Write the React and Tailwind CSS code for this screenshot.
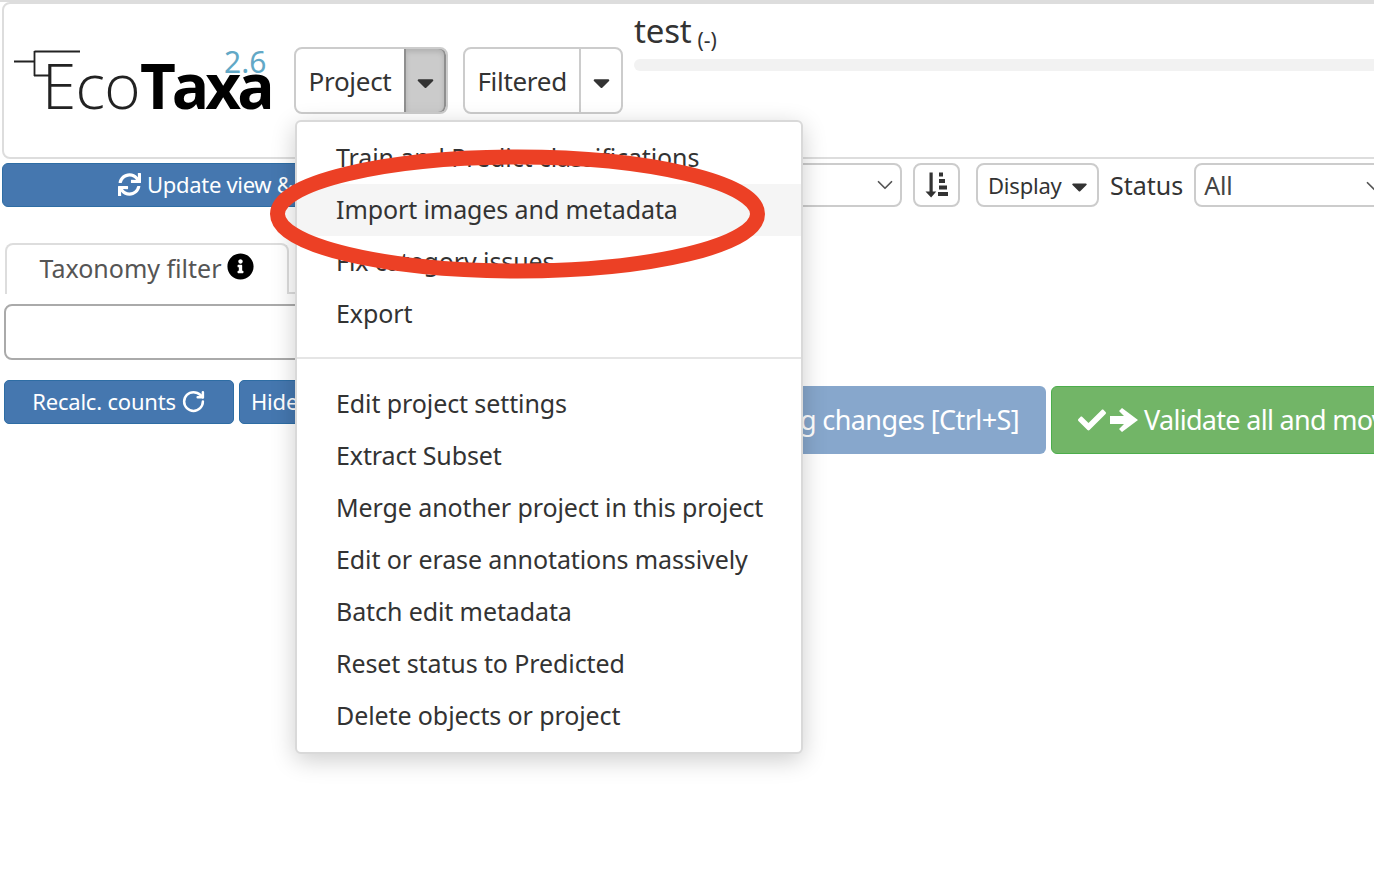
import React from "react";
import { FaCheck, FaInfoCircle, FaSync, FaCaretDown } from "react-icons/fa";
import { LuChevronDown, LuRotateCw } from "react-icons/lu";

const font = { fontFamily: '"Noto Sans", sans-serif' };

function Logo() {
  return (
    <div className="relative w-[290px] h-[67px] shrink-0 self-center overflow-visible">
      <svg className="absolute left-[10px] top-[2px]" width="70" height="40" viewBox="0 0 70 40">
        <path d="M0 13.5H20M20.5 3V28M20.5 3.5H66M20 27.5H36" fill="none" stroke="#222" strokeWidth="1.8" />
      </svg>
      <span className="absolute left-[38px] top-[6px] flex items-baseline leading-[66px] text-[62px] whitespace-nowrap text-[#222] [font-family:'Open_Sans',sans-serif]">
        <span className="font-light tracking-[-0.7px]">Eco</span>
        <span className="font-bold tracking-[-4px] text-black">Taxa</span>
      </span>
      <span className="absolute left-[220px] top-[1px] text-[30px] leading-[30px] text-[#62a8c6]">2.6</span>
    </div>
  );
}

function SplitButton({ label, open, labelWidth, className }) {
  return (
    <div className={`flex h-[67px] shrink-0 rounded-[8px] border-2 border-[#ccc] overflow-hidden ${className}`}>
      <div className="flex items-center justify-center pt-[2px] text-[26px] tracking-[-0.3px] text-[#333]" style={{ width: labelWidth }}>
        {label}
      </div>
      <div
        className={
          open
            ? "flex w-[42px] items-center justify-center pt-[4px] border-l-2 border-[#8f8f8f] bg-[#cbcbcb] shadow-[inset_0_3px_5px_rgba(0,0,0,0.125)] -my-[2px] -mr-[2px] border-y-2 border-r-2 rounded-r-[8px]"
            : "flex w-[42px] items-center justify-center pt-[4px] border-l-2 border-[#ccc]"
        }
      >
        <FaCaretDown className="text-[#333] text-[27px]" />
      </div>
    </div>
  );
}

function MenuItem({ children, active }) {
  return (
    <div className={`h-[52px] pl-[39px] flex items-center text-[25px] tracking-[-0.1px] text-[#333] whitespace-nowrap ${active ? "bg-[#f5f5f5]" : ""}`}>
      {children}
    </div>
  );
}

export default function App() {
  return (
    <div className="relative h-[894px] w-full overflow-hidden bg-white border-t-2 border-[#ddd]" style={font}>
      {/* top panel */}
      <div className="ml-[2px] -mr-[10px] h-[157px] rounded-[8px] border-2 border-[#ddd] flex items-start">
        <div className="flex items-center h-[153px] pb-[2px]">
          <Logo />
        </div>
        <SplitButton label="Project" open labelWidth={108} className="mt-[43px] w-[154px]" />
        <SplitButton label="Filtered" labelWidth={115} className="mt-[43px] ml-[15px] w-[160px]" />
        <div className="ml-[11px] flex-1">
          <div className="h-[55px] flex items-end pb-[6px] text-[#333]">
            <span className="text-[33px] tracking-[-0.2px] leading-[44px]">test</span>
            <span className="ml-[6px] -mb-[5px] text-[21px] leading-[36px]">(-)</span>
          </div>
          <div className="h-[12px] rounded-[6px] bg-[#f2f2f2]" />
        </div>
      </div>

      {/* toolbar */}
      <div className="mt-[4px] ml-[2px] flex items-center h-[44px] whitespace-nowrap">
        <div className="flex h-[44px] w-[538px] shrink-0 items-center justify-start pl-[115px] pb-[2px] rounded-[6px] border border-[#2e6da4] bg-[#4577af] text-white text-[22px] tracking-[-0.3px]">
          <FaSync className="mr-[6px] text-[23px]" />
          Update view &amp; filters
        </div>
        <div className="ml-[2px] flex h-[44px] w-[360px] shrink-0 items-center justify-end rounded-[8px] border-2 border-[#ccc] pr-[2px]">
          <LuChevronDown className="text-[#555] text-[26px]" strokeWidth={1.6} />
        </div>
        <div className="ml-[11px] flex h-[44px] w-[47px] shrink-0 items-center justify-center rounded-[8px] border-2 border-[#ccc]">
          <svg width="24" height="26" viewBox="0 0 24 26" fill="#333">
            <path d="M4.5 0.5h3.2v19h3.6L6.1 25.5 0.5 19.5h4z" />
            <rect x="14" y="0.5" width="4" height="4" />
            <rect x="14" y="7" width="6" height="4" />
            <rect x="14" y="13.5" width="8" height="4" />
            <rect x="13" y="20" width="10" height="4" />
          </svg>
        </div>
        <div className="ml-[16px] flex h-[44px] w-[123px] shrink-0 items-center justify-start gap-[5px] pl-[10px] rounded-[8px] border-2 border-[#ccc] text-[#333] text-[22px] tracking-[-0.2px]">
          Display
          <FaCaretDown className="text-[25px] mt-[2px]" />
        </div>
        <span className="ml-[11px] pt-[2px] text-[25px] tracking-[0px] text-[#333]">Status</span>
        <div className="ml-[11px] flex h-[44px] flex-1 -mr-[20px] items-center justify-between rounded-[8px] border-2 border-[#ccc] pl-[8px] pr-[5px] pt-[1px] text-[25px] text-[#444] tracking-[-0.2px]">
          All
          <LuChevronDown className="text-[#555] text-[26px]" strokeWidth={1.6} />
        </div>
      </div>

      {/* tabs */}
      <div className="mt-[36px] ml-[5px] flex h-[51px]">
        <div className="flex w-[284px] items-center justify-center gap-[6px] rounded-t-[8px] border-x-2 border-t-2 border-[#ddd] pb-[2px] text-[25px] tracking-[0px] text-[#555]">
          Taxonomy filter
          <FaInfoCircle className="text-[27px] text-black -mt-[4px]" />
        </div>
        <div className="w-[30px] border-b-2 border-[#ddd]" />
      </div>

      <div className="mt-[10px] ml-[4px] h-[56px] w-[600px] rounded-[8px] border-2 border-[#aaa]" />

      {/* action buttons */}
      <div className="mt-[20px] ml-[4px] flex items-start whitespace-nowrap">
        <div className="flex h-[44px] w-[230px] shrink-0 items-center justify-center gap-[5px] pb-[2px] rounded-[5px] border border-[#2e6da4] bg-[#4577af] text-white text-[22px] tracking-[-0.2px]">
          Recalc. counts
          <LuRotateCw className="text-[25px]" strokeWidth={2.4} />
        </div>
        <div className="ml-[5px] flex h-[44px] w-[200px] shrink-0 items-center rounded-[5px] border border-[#2e6da4] bg-[#4577af] pl-[11px] pb-[2px] text-white text-[22px] tracking-[-0.2px]">
          Hide
        </div>
        <div className="ml-[4px] mt-[6px] flex h-[68px] w-[603px] shrink-0 items-center justify-end rounded-[6px] bg-[#87a7cc] pr-[27px] text-white text-[27px] tracking-[-0.6px]">
          Saving changes [Ctrl+S]
        </div>
        <div className="ml-[5px] mt-[6px] flex h-[68px] w-[560px] shrink-0 items-center rounded-[6px] border border-[#4cae4c] bg-[#72b567] pl-[26px] text-white text-[27px] tracking-[-0.7px]">
          <FaCheck className="shrink-0 text-[28px]" />
          <svg className="ml-[4px] mr-[6px] shrink-0" width="28" height="24" viewBox="0 0 28 24" fill="white">
            <path d="M0 8h14L9 3l3-3 16 12-16 12-3-3 5-5H0z" />
          </svg>
          Validate all and move to next page
        </div>
      </div>

      {/* open dropdown */}
      <div className="absolute left-[295px] top-[118px] w-[508px] h-[634px] rounded-[6px] border-2 border-[#d9d9d9] bg-white pt-[10px] shadow-[0_6px_24px_rgba(0,0,0,0.2)]">
        <MenuItem>Train and Predict classifications</MenuItem>
        <MenuItem active>Import images and metadata</MenuItem>
        <MenuItem>Fix category issues</MenuItem>
        <MenuItem>Export</MenuItem>
        <div className="mt-[17px] mb-[19px] h-[2px] bg-[#e5e5e5]" />
        <MenuItem>Edit project settings</MenuItem>
        <MenuItem>Extract Subset</MenuItem>
        <MenuItem>Merge another project in this project</MenuItem>
        <MenuItem>Edit or erase annotations massively</MenuItem>
        <MenuItem>Batch edit metadata</MenuItem>
        <MenuItem>Reset status to Predicted</MenuItem>
        <MenuItem>Delete objects or project</MenuItem>
      </div>

      {/* red annotation */}
      <svg className="absolute left-[260px] top-[138px]" width="520" height="150" viewBox="0 0 520 150">
        <ellipse cx="257.5" cy="74" rx="240" ry="57" fill="none" stroke="#ec4025" strokeWidth="15" />
      </svg>
    </div>
  );
}
